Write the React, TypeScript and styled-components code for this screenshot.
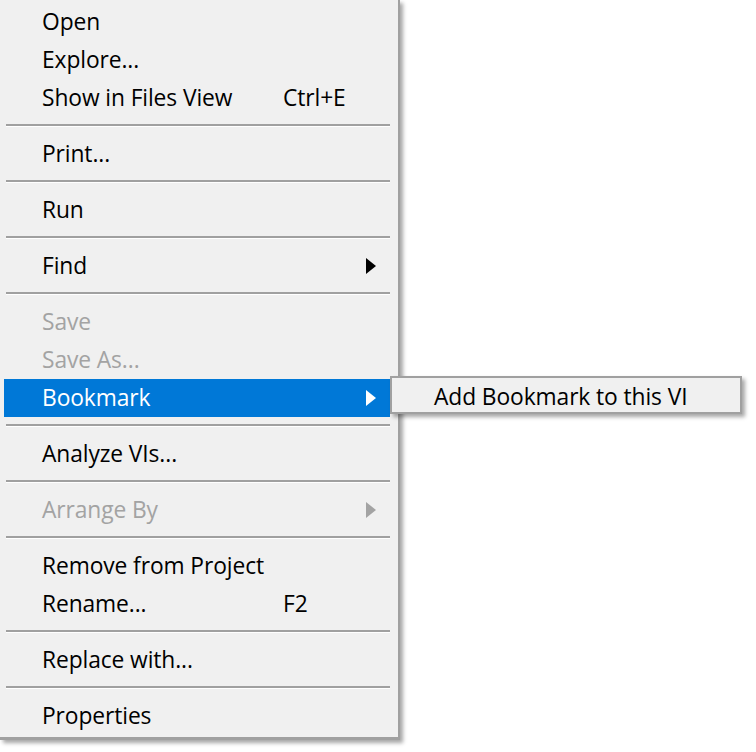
import React from "react";
import styled, { createGlobalStyle } from "styled-components";

const Global = createGlobalStyle`
  html, body { margin: 0; padding: 0; background: #ffffff; }
  body { font-family: "Open Sans", "Noto Sans", "Liberation Sans", sans-serif; }
`;

const Stage = styled.div`
  position: relative;
  width: 756px;
  height: 752px;
  overflow: hidden;
`;

const Menu = styled.div`
  box-sizing: border-box;
  width: 400px;
  padding: 3px 8px 2px 4px;
  background: #f0f0f0;
  border-right: 2px solid #a0a0a0;
  border-bottom: 3px solid #a0a0a0;
  box-shadow: 3px 3px 4px rgba(0, 0, 0, 0.35);
  display: flex;
  flex-direction: column;
`;

const Item = styled.div<{ $active?: boolean; $disabled?: boolean }>`
  height: 38px;
  box-sizing: border-box;
  padding: 0 14px 1px 38px;
  display: grid;
  grid-template-columns: 241px 1fr 10px;
  align-items: center;
  font-size: 22.8px;
  letter-spacing: -0.1px;
  background: ${(p) => (p.$active ? "#0078d7" : "transparent")};
  color: ${(p) => (p.$active ? "#ffffff" : p.$disabled ? "#a3a3a3" : "#000000")};
`;

const Label = styled.span`
  white-space: nowrap;
`;

const Shortcut = styled.span`
  white-space: nowrap;
`;

const Arrow = styled.span<{ $color: string }>`
  width: 0;
  height: 0;
  border-top: 8.5px solid transparent;
  border-bottom: 8.5px solid transparent;
  border-left: 10px solid ${(p) => p.$color};
`;

const Separator = styled.div`
  margin: 7px 0 8px 2px;
  border-top: 2px solid #a0a0a0;
  border-bottom: 1px solid #ffffff;
`;

const SubMenu = styled.div`
  position: absolute;
  left: 390px;
  top: 376px;
  box-sizing: border-box;
  width: 352px;
  height: 38px;
  background: #f0f0f0;
  border: 2px solid #a0a0a0;
  box-shadow: 3px 3px 4px rgba(0, 0, 0, 0.35);
  padding: 3px 0 0 42px;
  display: flex;
  align-items: center;
  font-size: 22.8px;
  letter-spacing: -0.1px;
  color: #000;
  white-space: nowrap;
`;

type Entry =
  | { sep: true }
  | { label: string; shortcut?: string; sub?: boolean; disabled?: boolean; active?: boolean };

const entries: Entry[] = [
  { label: "Open" },
  { label: "Explore..." },
  { label: "Show in Files View", shortcut: "Ctrl+E" },
  { sep: true },
  { label: "Print..." },
  { sep: true },
  { label: "Run" },
  { sep: true },
  { label: "Find", sub: true },
  { sep: true },
  { label: "Save", disabled: true },
  { label: "Save As...", disabled: true },
  { label: "Bookmark", sub: true, active: true },
  { sep: true },
  { label: "Analyze VIs..." },
  { sep: true },
  { label: "Arrange By", sub: true, disabled: true },
  { sep: true },
  { label: "Remove from Project" },
  { label: "Rename...", shortcut: "F2" },
  { sep: true },
  { label: "Replace with..." },
  { sep: true },
  { label: "Properties" },
];

export default function App() {
  return (
    <Stage>
      <Global />
      <Menu>
        {entries.map((e, i) =>
          "sep" in e ? (
            <Separator key={i} />
          ) : (
            <Item key={i} $active={e.active} $disabled={e.disabled}>
              <Label>{e.label}</Label>
              <Shortcut>{e.shortcut ?? ""}</Shortcut>
              {e.sub ? (
                <Arrow $color={e.active ? "#ffffff" : e.disabled ? "#a3a3a3" : "#000000"} />
              ) : (
                <span />
              )}
            </Item>
          )
        )}
      </Menu>
      <SubMenu>Add Bookmark to this VI</SubMenu>
    </Stage>
  );
}
